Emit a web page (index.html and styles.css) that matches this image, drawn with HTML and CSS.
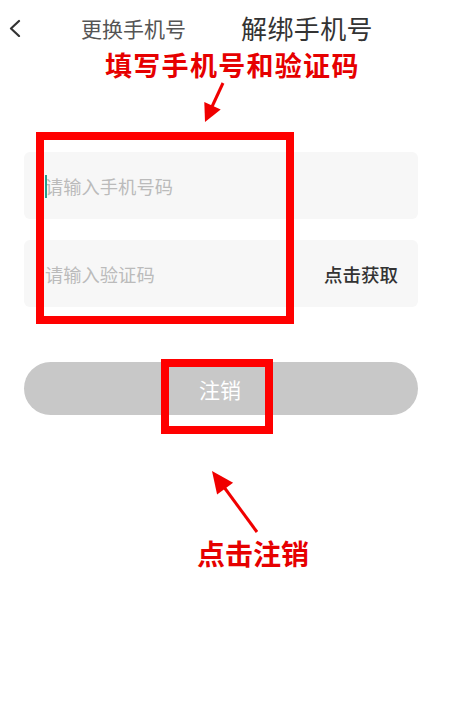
FILE: index.html
```html
<!DOCTYPE html>
<html lang="zh-CN">
<head>
<meta charset="utf-8">
<title>解绑手机号</title>
<link rel="stylesheet" href="styles.css">
</head>
<body>
<div class="page">
  <header class="topbar">
    <svg class="back" width="14" height="18" viewBox="0 0 14 18"><polyline points="11,2 3,9.5 11,17" fill="none" stroke="#333" stroke-width="2.2" stroke-linecap="round" stroke-linejoin="round"/></svg>
    <span class="tab">更换手机号</span>
    <span class="title">解绑手机号</span>
  </header>

  <div class="note note-top">填写手机号和验证码</div>
  <svg class="arrow arrow-top" width="456" height="72" viewBox="0 0 456 72">
    <line x1="223" y1="3" x2="210" y2="31" stroke="#f00000" stroke-width="3"/>
    <polygon points="205,42 220.7,29.5 204.3,21.9" fill="#f00000"/>
  </svg>

  <div class="form">
    <div class="field field-phone"><span class="ph">请输入手机号码</span></div>
    <div class="field field-code"><span class="ph">请输入验证码</span><span class="get">点击获取</span></div>
    <div class="hl hl-form"></div>
  </div>

  <div class="btn-wrap">
    <div class="btn">注销</div>
    <div class="hl hl-btn"></div>
  </div>

  <svg class="arrow arrow-bottom" width="456" height="120" viewBox="0 0 456 120">
    <line x1="257" y1="117" x2="221" y2="68" stroke="#f00000" stroke-width="3"/>
    <polygon points="212,56 233.1,67.8 217.1,79.6" fill="#f00000"/>
  </svg>
  <div class="note note-bottom">点击注销</div>
</div>
</body>
</html>
```
FILE: styles.css
```css
* { box-sizing: border-box; }
html, body { margin: 0; padding: 0; background: #fff; }
body { font-family: "Noto Sans CJK SC", "Noto Sans", sans-serif; }
.page { width: 456px; height: 720px; overflow: hidden; }

.topbar { height: 50px; display: flex; align-items: center; padding: 5px 0 0 8px; }
.back { display: block; margin-right: 59px; margin-top: 0; }
.tab { font-size: 21px; color: #555; margin-right: 55px; }
.title { font-size: 26px; color: #333; letter-spacing: 0.4px; }

.note { color: #e60000; font-weight: 700; font-size: 27px; line-height: 30px; white-space: nowrap; }
.note-top { padding-left: 105px; letter-spacing: 1.3px; }
.note-bottom { padding-left: 197px; margin-top: 3px; font-size: 28px; }
.arrow { display: block; }

.form { position: relative; margin-left: 24px; width: 394px; display: flex; flex-direction: column; gap: 21px; }
.field { position: relative; height: 67px; background: #f7f7f7; border-radius: 6px; display: flex; align-items: center; justify-content: space-between; padding: 0 20px 0 21px; }
.ph { font-size: 18.3px; color: #bbb; }
.field-phone::before { content: ""; position: absolute; left: 21px; top: 23px; width: 2px; height: 23px; background: #2a9d8f; }
.get { font-size: 18.5px; color: #333; font-weight: 500; }

.btn-wrap { position: relative; margin: 55px 0 0 24px; width: 394px; }
.btn { height: 53px; border-radius: 27px; background: #c8c8c8; color: #fff; font-size: 21px; display: flex; align-items: center; justify-content: center; padding-right: 2px; }

.hl { position: absolute; border: 8px solid #f00; }
.hl-form { left: 12px; top: -20px; width: 258px; height: 192px; }
.hl-btn { left: 137px; top: -3px; width: 112px; height: 75px; }
```
